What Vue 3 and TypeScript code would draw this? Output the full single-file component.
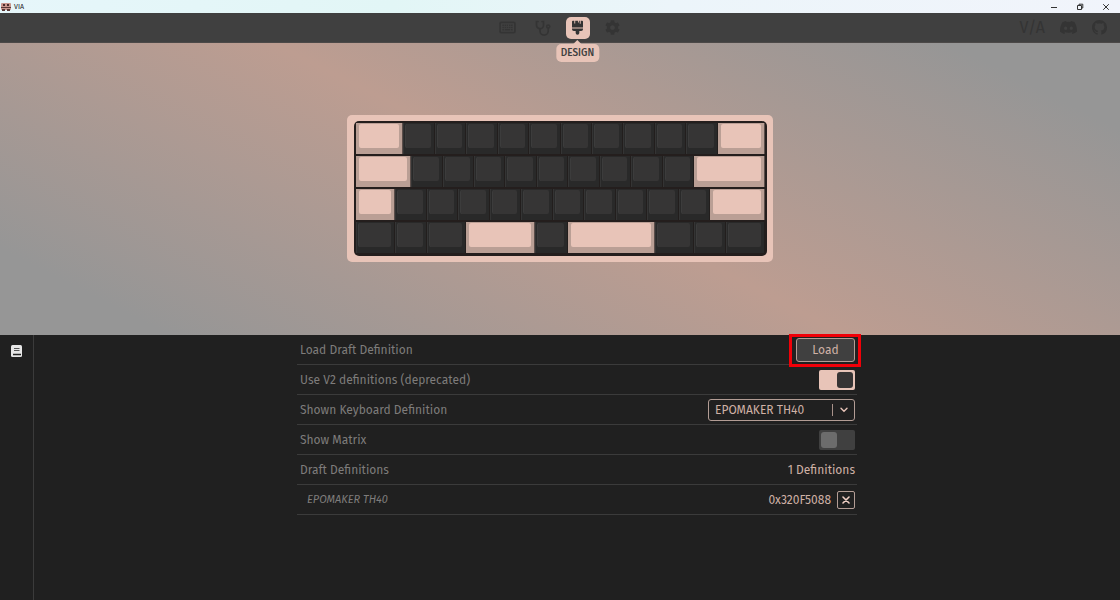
<script setup lang="ts">
import { ref } from 'vue'

interface Key {
  units: number
  accent: boolean
}

const key = (units: number, accent = false): Key => ({ units, accent })
const run = (count: number): Key[] => Array.from({ length: count }, () => key(1))

const rows: Key[][] = [
  [key(1.5, true), ...run(10), key(1.5, true)],
  [key(1.75, true), ...run(9), key(2.25, true)],
  [key(1.25, true), ...run(10), key(1.75, true)],
  [key(1.25), key(1), key(1.25), key(2.2, true), key(1.03), key(2.77, true), key(1.25), key(1), key(1.25)],
]

const useV2 = ref(true)
const showMatrix = ref(false)
const shown = ref('EPOMAKER TH40')
</script>

<template>
  <div class="window">
    <div class="titlebar">
      <svg class="app-icon" viewBox="0 0 10 8" aria-hidden="true">
        <rect width="10" height="7" rx="1" fill="#c9968c" />
        <rect x="0" y="4" width="10" height="1" fill="#5a3835" />
        <rect x="2" y="1" width="2" height="2" fill="#4a2c2b" />
        <rect x="6" y="1" width="2" height="2" fill="#4a2c2b" />
        <rect x="1" y="6" width="3" height="2" fill="#5a3835" />
        <rect x="6" y="6" width="3" height="2" fill="#5a3835" />
      </svg>
      <span class="app-name">VIA</span>
      <div class="window-buttons">
        <button type="button" aria-label="Minimize">
          <svg viewBox="0 0 8 8"><path d="M1 4.5h6" /></svg>
        </button>
        <button type="button" aria-label="Restore">
          <svg viewBox="0 0 8 8"><path d="M1.5 2.5h4v4h-4zM3 2.500V1.200h3.800V5H5.500" /></svg>
        </button>
        <button type="button" aria-label="Close">
          <svg viewBox="0 0 8 8"><path d="M1.200 1.200l5.600 5.600M6.800 1.200L1.200 6.800" /></svg>
        </button>
      </div>
    </div>

    <header class="header">
      <nav class="nav">
        <a href="#configure" aria-label="Configure">
          <svg viewBox="0 0 18 14" width="17" height="13">
            <rect x="1" y="1.500" width="16" height="11" rx="1.200" fill="none" stroke="currentColor" stroke-width="1.800" />
            <path d="M3.500 4.600h11M3.500 7h11" stroke="currentColor" stroke-width="1.600" stroke-dasharray="1.600 .75" />
            <path d="M3.500 9.500h1.600M6 9.500h6M12.900 9.500h1.600" stroke="currentColor" stroke-width="1.600" />
          </svg>
        </a>
        <a href="#test" aria-label="Key tester">
          <svg viewBox="0 0 16 16" width="16" height="16" fill="none" stroke="currentColor" stroke-width="1.700" stroke-linecap="round">
            <path d="M3 1.500H1.500v3.700a3.500 3.500 0 0 0 7 0V1.500H7" />
            <path d="M5 9v2a4.100 4.100 0 0 0 8.200 0V8.300" />
            <circle cx="13.200" cy="6.500" r="1.500" />
          </svg>
        </a>
        <a href="#design" class="active" aria-label="Design" aria-current="page">
          <svg viewBox="0 0 12 16" width="11" height="15" fill="currentColor">
            <path d="M1 .5h1.500v3h1v-3h3v2h1v-2h1v3.500h1V.5H11a1 1 0 0 1 1 1V8H0V1.500a1 1 0 0 1 1-1z" />
            <path d="M0 9h12v.8a2 2 0 0 1-2 2H8V14a2 2 0 0 1-4 0v-2.200H2a2 2 0 0 1-2-2z" />
          </svg>
          <span class="tooltip">DESIGN</span>
        </a>
        <a href="#settings" aria-label="Settings">
          <svg viewBox="0 0 512 512" width="15" height="15" fill="currentColor">
            <path d="M487.4 315.7l-42.6-24.6c4.300-23.200 4.300-47 0-70.200l42.600-24.600c4.900-2.800 7.100-8.600 5.500-14-11.100-35.600-30-67.800-54.700-94.600-3.800-4.100-10-5.100-14.800-2.300L380.800 110c-17.900-15.400-38.500-27.300-60.800-35.100V25.800c0-5.600-3.900-10.500-9.400-11.700-36.700-8.200-74.300-7.800-109.200 0-5.500 1.200-9.400 6.100-9.400 11.700V75c-22.200 7.900-42.800 19.800-60.800 35.100L88.700 85.500c-4.900-2.800-11-1.900-14.800 2.300-24.700 26.700-43.600 58.900-54.700 94.600-1.700 5.400.6 11.200 5.500 14L67.300 221c-4.300 23.200-4.300 47 0 70.200l-42.600 24.600c-4.900 2.800-7.100 8.600-5.500 14 11.100 35.600 30 67.800 54.700 94.600 3.800 4.100 10 5.100 14.800 2.300l42.600-24.600c17.900 15.400 38.500 27.300 60.800 35.100v49.200c0 5.600 3.900 10.500 9.400 11.700 36.700 8.200 74.300 7.800 109.200 0 5.500-1.200 9.400-6.100 9.400-11.700v-49.200c22.200-7.900 42.800-19.800 60.800-35.100l42.600 24.600c4.900 2.800 11 1.900 14.800-2.300 24.700-26.700 43.600-58.900 54.700-94.600 1.500-5.500-.7-11.300-5.600-14.100zM256 336c-44.100 0-80-35.900-80-80s35.900-80 80-80 80 35.900 80 80-35.900 80-80 80z" />
          </svg>
        </a>
      </nav>
      <div class="links">
        <a href="#via" class="brand" aria-label="VIA">V/A</a>
        <a href="#discord" aria-label="Discord">
          <svg viewBox="0 0 24 24" width="17" height="17" fill="currentColor">
            <path fill-rule="evenodd" d="M20.300 4.400a19.800 19.800 0 0 0-4.900-1.500l-.7 1.300a18.300 18.300 0 0 0-5.400 0l-.7-1.300a19.700 19.700 0 0 0-4.900 1.500C.6 9 -.3 13.600.1 18.100a19.900 19.900 0 0 0 6 3l1.300-2a13 13 0 0 1-1.900-.9l.4-.3a14.200 14.200 0 0 0 12.100 0l.4.3a12.300 12.300 0 0 1-1.900.9l1.300 2a19.800 19.800 0 0 0 6-3c.5-5.200-.8-9.700-3.500-13.700zM8 15.300c-1.200 0-2.200-1.100-2.200-2.400S6.800 10.500 8 10.500s2.200 1.100 2.200 2.400-1 2.400-2.200 2.400zm8 0c-1.200 0-2.200-1.100-2.200-2.400s1-2.400 2.200-2.400 2.200 1.100 2.200 2.400-1 2.400-2.200 2.400z" />
          </svg>
        </a>
        <a href="#github" aria-label="GitHub">
          <svg viewBox="0 0 16 16" width="15" height="15" fill="currentColor">
            <path d="M8 0C3.580 0 0 3.580 0 8c0 3.540 2.290 6.530 5.470 7.590.4.070.55-.17.55-.38 0-.19-.01-.82-.01-1.490-2.010.37-2.530-.49-2.690-.94-.09-.23-.48-.94-.82-1.130-.28-.15-.68-.52-.01-.53.63-.01 1.080.58 1.230.82.72 1.210 1.870.87 2.330.66.070-.52.280-.87.510-1.070-1.780-.2-3.640-.89-3.640-3.950 0-.87.310-1.590.82-2.150-.08-.2-.36-1.020.08-2.120 0 0 .67-.21 2.200.82.640-.18 1.320-.27 2-.27s1.360.09 2 .27c1.530-1.040 2.200-.82 2.200-.82.440 1.100.16 1.920.08 2.120.51.56.82 1.270.82 2.150 0 3.070-1.870 3.750-3.650 3.950.29.25.54.73.54 1.480 0 1.070-.01 1.930-.01 2.200 0 .21.15.46.55.38A8.010 8.010 0 0 0 16 8c0-4.420-3.580-8-8-8z" />
          </svg>
        </a>
      </div>
    </header>

    <section class="stage" aria-label="Keyboard preview">
      <div class="case">
        <div class="plate">
          <div v-for="(row, r) in rows" :key="r" class="key-row">
            <div
              v-for="(k, i) in row"
              :key="i"
              class="key"
              :class="{ accent: k.accent }"
              :style="{ flexGrow: k.units }"
            >
              <div class="cap"></div>
            </div>
          </div>
        </div>
      </div>
    </section>

    <main class="panel">
      <aside class="sidebar">
        <button type="button" aria-label="Definitions">
          <svg viewBox="0 0 11 12" width="11" height="12">
            <rect width="11" height="12" rx="1.500" fill="#e6e6e6" />
            <path d="M3 3.500h5.500M3 5.500h5.500" stroke="#555" stroke-width="1" />
            <path d="M2 9.500h8" stroke="#222" stroke-width="1.500" />
          </svg>
        </button>
      </aside>
      <div class="content">
        <div class="settings">
          <div class="setting">
            <span>Load Draft Definition</span>
            <div class="highlight">
              <button type="button" class="load">Load</button>
            </div>
          </div>
          <div class="setting">
            <label for="v2">Use V2 definitions (deprecated)</label>
            <input id="v2" v-model="useV2" type="checkbox" class="toggle" />
          </div>
          <div class="setting">
            <label for="shown">Shown Keyboard Definition</label>
            <div class="select">
              <select id="shown" v-model="shown">
                <option>EPOMAKER TH40</option>
              </select>
              <svg class="chevron" viewBox="0 0 8 6" width="8" height="6" aria-hidden="true">
                <path d="M1 1.200l3 3 3-3" fill="none" stroke="currentColor" stroke-width="1.400" stroke-linecap="round" />
              </svg>
            </div>
          </div>
          <div class="setting">
            <label for="matrix">Show Matrix</label>
            <input id="matrix" v-model="showMatrix" type="checkbox" class="toggle" />
          </div>
          <div class="setting">
            <span>Draft Definitions</span>
            <span class="value">1 Definitions</span>
          </div>
          <div class="setting">
            <span class="draft">EPOMAKER TH40</span>
            <div class="draft-actions">
              <span class="value">0x320F5088</span>
              <button type="button" class="remove" aria-label="Remove EPOMAKER TH40">
                <svg viewBox="0 0 8 8" width="8" height="8">
                  <path d="M1 1l6 6M7 1L1 7" stroke="currentColor" stroke-width="1.600" stroke-linecap="round" />
                </svg>
              </button>
            </div>
          </div>
        </div>
      </div>
    </main>
  </div>
</template>

<style>
body {
  margin: 0;
  background: #202020;
}
</style>

<style scoped>
.window {
  --accent: #e8c4b8;
  --line: #3b3b3b;
  display: flex;
  flex-direction: column;
  min-height: 100vh;
  font-family: "Fira Sans", "Noto Sans", sans-serif;
  font-size: 12px;
  line-height: 16px;
  color: #7e7c7b;
  background: #202020;
}

button {
  padding: 0;
  border: 0;
  background: none;
  color: inherit;
  font: inherit;
}

a {
  color: inherit;
  text-decoration: none;
}

svg {
  display: block;
}

.titlebar {
  display: flex;
  align-items: center;
  gap: 3px;
  height: 13px;
  padding-left: 1px;
  background: linear-gradient(90deg, #e6f6fa, #e2f6f6 35%, #ecf5fa 60%, #f1f4fb);
  color: #222;
  font-size: 7px;
  line-height: 12px;
}

.app-icon {
  width: 10px;
  height: 8px;
}

.window-buttons {
  display: flex;
  gap: 18px;
  margin-left: auto;
  padding-right: 10px;
}

.window-buttons svg {
  width: 8px;
  height: 8px;
  fill: none;
  stroke: #333;
  stroke-width: 1;
}

.header {
  position: relative;
  display: flex;
  justify-content: center;
  align-items: center;
  height: 29px;
  border-bottom: 1px solid #4c4948;
  background: #404040;
  color: #343434;
}

.nav {
  display: flex;
  align-items: center;
  gap: 11px;
}

.nav a {
  display: flex;
  justify-content: center;
  align-items: center;
  width: 24px;
  height: 22px;
  border-radius: 5px;
}

.nav .active {
  position: relative;
  background: var(--accent);
  color: #333;
}

.tooltip {
  position: absolute;
  top: 27px;
  left: 50%;
  z-index: 1;
  padding: 1px 5px;
  border-radius: 5px;
  background: var(--accent);
  color: #404040;
  font-size: 10px;
  font-weight: 500;
  transform: translateX(-50%);
}

.tooltip::before {
  content: "";
  position: absolute;
  top: -4px;
  left: 50%;
  border: 4px solid transparent;
  border-top: 0;
  border-bottom-color: var(--accent);
  transform: translateX(-50%);
}

.links {
  position: absolute;
  right: 13px;
  display: flex;
  align-items: center;
  gap: 15px;
}

.brand {
  font-size: 16px;
}

.stage {
  box-sizing: border-box;
  display: flex;
  justify-content: center;
  align-items: center;
  height: 292px;
  padding-bottom: 2px;
  background: linear-gradient(27deg, #969696 10%, #bd9d91 50%, #969696 90%);
}

.case {
  width: 413px;
  padding: 6px 6px 6px 7px;
  border-radius: 5px;
  background: var(--accent);
}

.plate {
  display: flex;
  flex-direction: column;
  gap: 2px;
  padding: 2px;
  padding-bottom: 3px;
  border-radius: 5px;
  background: #241e1d;
}

.key-row {
  display: flex;
}

.key {
  display: flex;
  flex: 0 1 0;
  height: 31px;
  background: #292929;
  box-shadow: inset 1px 0 #343434, inset -1px 0 #221e1d;
}

.cap {
  flex: 1;
  margin: 1px 4px 6px 3px;
  border-radius: 2px;
  background: #363535;
  box-shadow: -1px 0 #3c3c3c;
}

.key.accent {
  background: #ba9f95;
  box-shadow: inset -1px 0 #5c4e4a;
}

.accent .cap {
  background: var(--accent);
  box-shadow: none;
}

.panel {
  flex: 1;
  display: flex;
}

.sidebar {
  display: flex;
  justify-content: center;
  align-items: flex-start;
  width: 33px;
  padding-top: 10px;
  border-right: 1px solid var(--line);
}

.content {
  flex: 1;
  display: flex;
  justify-content: center;
  align-items: flex-start;
}

.settings {
  flex: 0 1 560px;
}

.setting {
  box-sizing: border-box;
  display: flex;
  justify-content: space-between;
  align-items: center;
  height: 30px;
  padding: 0 2px 0 3px;
  border-bottom: 1px solid var(--line);
}

.highlight {
  position: relative;
}

.highlight::after {
  content: "";
  position: absolute;
  inset: -4px -6px -5px -7px;
  border: 3px solid #f00008;
  pointer-events: none;
}

.load {
  display: block;
  width: 59px;
  height: 24px;
  border: 1px solid #b39d95;
  border-radius: 3px;
  background: #404040;
  color: #cfb1a6;
}

.toggle {
  appearance: none;
  display: flex;
  align-items: center;
  width: 36px;
  height: 20px;
  margin: 0;
  padding: 0 2px;
  box-sizing: border-box;
  border-radius: 2px;
  background: #404040;
}

.toggle::before {
  content: "";
  width: 16px;
  height: 16px;
  border-radius: 3px;
  background: #6c6c6c;
}

.toggle:checked {
  justify-content: flex-end;
  background: var(--accent);
}

.toggle:checked::before {
  background: #363434;
}

.select {
  position: relative;
  display: flex;
  align-items: center;
}

.select select {
  appearance: none;
  box-sizing: border-box;
  width: 147px;
  height: 22px;
  padding: 0 28px 0 6px;
  border: 1px solid #b39d95;
  border-radius: 3px;
  background: transparent;
  color: #cfb1a6;
  font: inherit;
}

.select::after {
  content: "";
  position: absolute;
  right: 22px;
  height: 12px;
  border-left: 1px solid #a8928a;
}

.chevron {
  position: absolute;
  right: 7px;
  color: #e8c4b8;
  pointer-events: none;
}

.value {
  color: #cfb1a6;
}

.draft {
  padding-left: 7px;
  font-size: 11px;
  font-style: italic;
}

.draft-actions {
  display: flex;
  align-items: center;
  gap: 6px;
}

.remove {
  display: flex;
  justify-content: center;
  align-items: center;
  width: 18px;
  height: 18px;
  border: 1px solid #b39d95;
  border-radius: 2px;
  color: #f0cfc4;
}
</style>
